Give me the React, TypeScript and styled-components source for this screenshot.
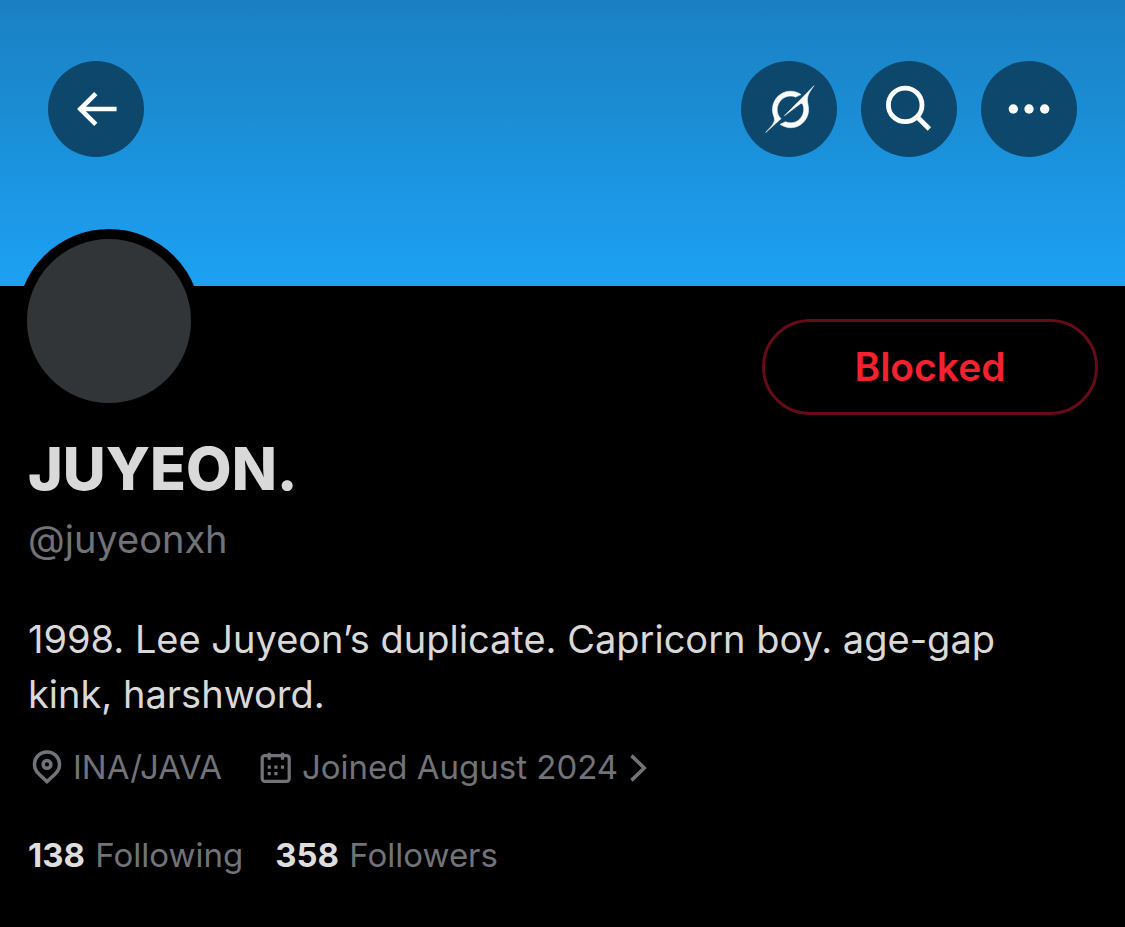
import React from "react";
import styled, { createGlobalStyle } from "styled-components";

const GlobalStyle = createGlobalStyle`
  *, *::before, *::after { box-sizing: border-box; }
  html, body, #root { min-height: 100%; }
  body {
    margin: 0;
    background: #000;
    color: #d9d9d9;
    font-family: Inter, "Liberation Sans", sans-serif;
  }
  h1, p { margin: 0; }
  svg { display: block; flex: none; }
`;

const Banner = styled.header`
  display: flex;
  align-items: flex-start;
  gap: 24px;
  height: 286px;
  padding: 61px 48px 0;
  background: linear-gradient(#1b80c2, #1b92dc 55%, #1da1f4);
`;

const RoundButton = styled.button<{ $pushRight?: boolean }>`
  width: 96px;
  height: 96px;
  margin: 0 ${(p) => (p.$pushRight ? "auto" : "0")} 0 0;
  padding: 0;
  border: 0;
  border-radius: 50%;
  background: #0d476c;
  color: #fff;
  cursor: pointer;
`;

const Profile = styled.main`
  padding: 0 27px 48px 28px;
`;

const TopRow = styled.div`
  display: flex;
  justify-content: space-between;
  align-items: flex-end;
  height: 129px;
`;

const Avatar = styled.div`
  position: relative;
  width: 184px;
  height: 184px;
  margin: 0 0 2px -11px;
  border: 10px solid #000;
  border-radius: 50%;
  background: #323537;
`;

const BlockedButton = styled.button`
  width: 336px;
  height: 96px;
  padding: 0;
  border: 3px solid #650c16;
  border-radius: 48px;
  background: transparent;
  color: #f4212e;
  font: 600 39px/48px Inter, "Liberation Sans", sans-serif;
  cursor: pointer;
`;

const Name = styled.h1`
  margin-top: 19px;
  font-size: 59px;
  line-height: 70px;
  font-weight: 800;
`;

const Handle = styled.p`
  margin-top: 11px;
  font-size: 38px;
  line-height: 48px;
  color: #717378;
`;

const Bio = styled.p`
  margin-top: 49px;
  padding-right: 48px;
  font-size: 38px;
  line-height: 55px;
`;

const MetaRow = styled.div`
  display: flex;
  gap: 34px;
  margin-top: 25px;
  color: #717378;
  font-size: 33px;
  line-height: 40px;
`;

const MetaItem = styled.span`
  display: flex;
  align-items: center;
  gap: 5px;
`;

const MetaLink = styled.a`
  display: flex;
  align-items: center;
  gap: 6px;
  color: inherit;
  text-decoration: none;
`;

const Stats = styled.nav`
  display: flex;
  gap: 32px;
  margin-top: 48px;
  font-size: 33px;
  line-height: 40px;
`;

const Stat = styled.a`
  color: #717378;
  text-decoration: none;
`;

const Count = styled.strong`
  font-weight: 700;
  margin-right: 1px;
  color: #dedede;
`;

const BackIcon = () => (
  <svg width="96" height="96" viewBox="0 0 96 96" fill="none" stroke="currentColor" strokeWidth="4.6" aria-hidden="true">
    <path d="M47.8 32.6 32.3 48l15.5 15.4M32.3 48h36.3" />
  </svg>
);

const GrokIcon = () => (
  <svg width="96" height="96" viewBox="0 0 96 96" fill="currentColor" stroke="currentColor" strokeWidth="0.35" aria-hidden="true">
    <path
      transform="translate(24.7 24.7) scale(1.464)"
      d="M12.745 20.54l10.97-8.19c.539-.4 1.307-.244 1.564.38 1.349 3.288.746 7.241-1.938 9.955-2.683 2.714-6.417 3.31-9.83 1.954l-3.728 1.745c5.347 3.697 11.84 2.782 15.898-1.324 3.219-3.255 4.216-7.692 3.284-11.693l.008.009c-1.351-5.878.332-8.227 3.782-13.031L33 0l-4.54 4.59v-.014L12.743 20.544m-2.263 1.987c-3.837-3.707-3.175-9.446.1-12.755 2.42-2.449 6.388-3.448 9.852-1.979l3.72-1.737c-.67-.49-1.53-1.017-2.515-1.387-4.455-1.854-9.789-.931-13.41 2.728-3.483 3.523-4.579 8.94-2.697 13.561 1.405 3.454-.899 5.898-3.22 8.364C1.49 30.2.666 31.074 0 32l10.478-9.466"
    />
  </svg>
);

const SearchIcon = () => (
  <svg width="96" height="96" viewBox="0 0 96 96" fill="none" stroke="currentColor" strokeWidth="4.8" aria-hidden="true">
    <circle cx="44.2" cy="43.9" r="16.8" />
    <path d="M56 55.7 68.4 68" />
  </svg>
);

const MoreIcon = () => (
  <svg width="96" height="96" viewBox="0 0 96 96" fill="currentColor" aria-hidden="true">
    <circle cx="32.3" cy="48" r="4.7" />
    <circle cx="48" cy="48" r="4.7" />
    <circle cx="63.7" cy="48" r="4.7" />
  </svg>
);

const PinIcon = () => (
  <svg width="40" height="40" viewBox="0 0 40 40" fill="none" stroke="currentColor" strokeWidth="3.5" aria-hidden="true">
    <path d="M19 34.6l-7.6-7C8.1 24.4 6.5 21.2 6.5 17.4a12.5 12.5 0 0 1 25 0c0 3.8-1.6 7-4.9 10.2z" />
    <circle cx="19" cy="17.4" r="3.9" />
  </svg>
);

const CalendarIcon = () => (
  <svg width="40" height="40" viewBox="0 0 40 40" fill="none" stroke="currentColor" strokeWidth="3.2" aria-hidden="true">
    <rect x="6.2" y="8.6" width="27" height="25.8" rx="2.6" />
    <path d="M13.2 5.7v7M26.5 5.7v7" />
    <path d="M11.7 20.2h3.2M18.3 20.2h3.2M24.9 20.2h3.2M11.7 26.6h3.2M18.3 26.6h3.2" />
  </svg>
);

const ChevronIcon = () => (
  <svg width="30" height="40" viewBox="0 0 30 40" fill="none" stroke="currentColor" strokeWidth="3.6" aria-hidden="true">
    <path d="M7.5 8.6 20.2 21 7.5 33.4" />
  </svg>
);

export default function App() {
  return (
    <>
      <GlobalStyle />
      <Banner>
        <RoundButton type="button" aria-label="Back" $pushRight>
          <BackIcon />
        </RoundButton>
        <RoundButton type="button" aria-label="Grok">
          <GrokIcon />
        </RoundButton>
        <RoundButton type="button" aria-label="Search">
          <SearchIcon />
        </RoundButton>
        <RoundButton type="button" aria-label="More">
          <MoreIcon />
        </RoundButton>
      </Banner>
      <Profile>
        <TopRow>
          <Avatar />
          <BlockedButton type="button">Blocked</BlockedButton>
        </TopRow>
        <Name>JUYEON.</Name>
        <Handle>@juyeonxh</Handle>
        <Bio>1998. Lee Juyeon’s duplicate. Capricorn boy. age-gap kink, harshword.</Bio>
        <MetaRow>
          <MetaItem>
            <PinIcon />
            INA/JAVA
          </MetaItem>
          <MetaLink href="#joined">
            <CalendarIcon />
            Joined August 2024
            <ChevronIcon />
          </MetaLink>
        </MetaRow>
        <Stats>
          <Stat href="#following">
            <Count>138</Count> Following
          </Stat>
          <Stat href="#followers">
            <Count>358</Count> Followers
          </Stat>
        </Stats>
      </Profile>
    </>
  );
}
